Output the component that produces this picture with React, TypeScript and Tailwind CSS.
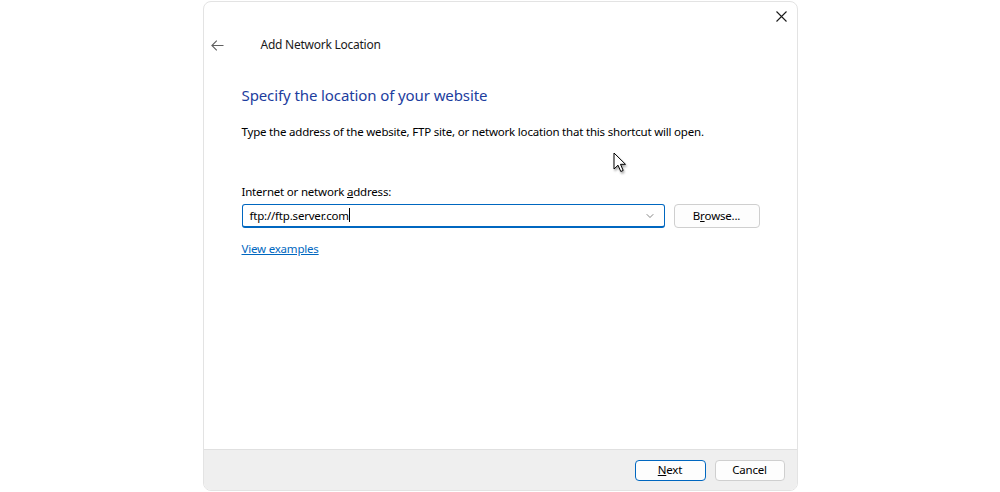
import { ChevronDown } from 'lucide-react';

const font = { fontFamily: '"Noto Sans", "Liberation Sans", sans-serif' };

const Cursor = () => (
  <svg
    width="14"
    height="22"
    viewBox="0 0 14 22"
    className="absolute left-[613px] top-[152px] drop-shadow-[1px_2px_1px_rgba(0,0,0,0.35)]"
  >
    <path
      d="M1 1 L1 17 L5 13.2 L7.8 19.5 L10.2 18.4 L7.5 12.3 L12.5 12.3 Z"
      fill="#fff"
      stroke="#000"
      strokeWidth="1"
      strokeLinejoin="round"
    />
  </svg>
);

export default function App() {
  return (
    <div
      className="relative flex h-[492px] w-full justify-center bg-white pt-px text-[11.5px] tracking-[-0.2px] text-black"
      style={font}
    >
      <div className="flex h-[490px] w-[595px] flex-col overflow-hidden rounded-lg border border-[#e3e3e3] bg-white">
        {/* title bar */}
        <div className="flex h-[28px] justify-end">
          <button className="flex h-[28px] w-[31px] items-center justify-center text-[#1a1a1a]">
            <svg width="11" height="11" viewBox="0 0 11 11">
              <path d="M0.5 0.5 L10.5 10.5 M10.5 0.5 L0.5 10.5" stroke="#1a1a1a" strokeWidth="1.1" />
            </svg>
          </button>
        </div>

        {/* header */}
        <div className="flex h-[30px] items-center">
          <span className="ml-[6px] flex w-[16px] justify-center">
            <svg width="13" height="11" viewBox="0 0 13 11">
              <path d="M12.5 5.5 H1 M5.8 0.6 L0.9 5.5 L5.8 10.4" fill="none" stroke="#606060" strokeWidth="1.1" />
            </svg>
          </span>
          <span className="ml-[35px] text-[12px] tracking-[-0.25px] text-[#1a1a1a]">Add Network Location</span>
        </div>

        {/* content */}
        <div className="flex flex-1 flex-col pl-[38px] pr-[36px]">
          <h1 className="mt-[24px] text-[15px] leading-[22px] tracking-[-0.1px] text-[#1c3d9e]">
            Specify the location of your website
          </h1>
          <p className="mt-[18px] leading-[16px]">
            Type the address of the website, FTP site, or network location that this shortcut will open.
          </p>

          <label className="mt-[44px] leading-[16px]">
            Internet or network <span className="underline">a</span>ddress:
          </label>
          <div className="mt-[4px] flex items-center gap-[9px]">
            <div className="flex h-[24px] w-[423px] items-center rounded-[3px] border border-b-2 border-[#0067c0] bg-white pl-[7px] pr-[8px]">
              <span className="flex-1">
                ftp://ftp.server.com<span className="inline-block h-[14px] w-px translate-y-[2px] bg-black" />
              </span>
              <ChevronDown size={12} strokeWidth={1.3} className="text-[#444]" />
            </div>
            <button className="flex h-[24px] w-[86px] items-center justify-center rounded-[4px] border border-[#cfcfcf] bg-[#fdfdfd]">
              B<span className="underline">r</span>owse...
            </button>
          </div>
          <a className="mt-[12px] w-fit text-[#0067c0] underline">View examples</a>
        </div>

        {/* footer */}
        <div className="flex h-[41px] items-center justify-end gap-[9px] border-t border-[#e0e0e0] bg-[#efefef] pr-[12px]">
          <button className="flex h-[21px] w-[71px] items-center justify-center rounded-[4px] border border-[#0067c0] bg-[#fdfdfd]">
            <span className="underline">N</span>ext
          </button>
          <button className="flex h-[21px] w-[70px] items-center justify-center rounded-[4px] border border-[#cfcfcf] bg-[#fdfdfd]">
            Cancel
          </button>
        </div>
      </div>
      <Cursor />
    </div>
  );
}
